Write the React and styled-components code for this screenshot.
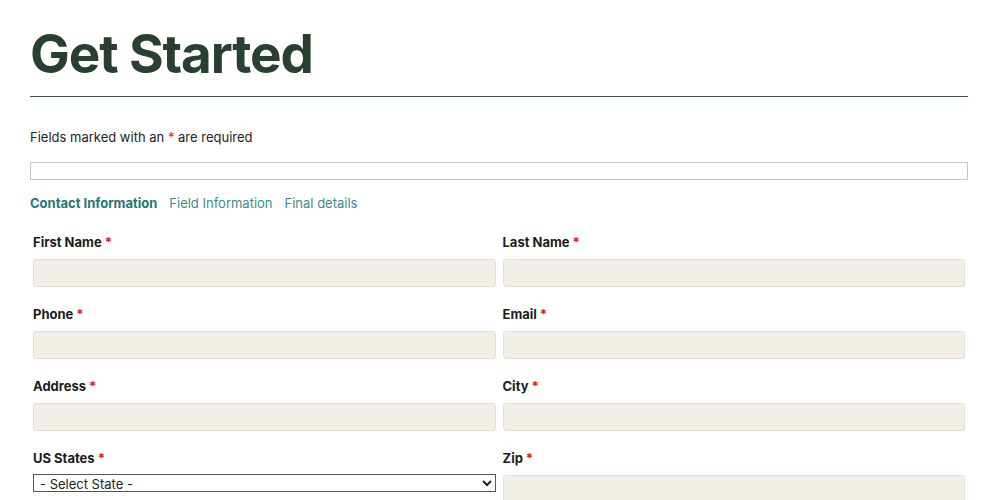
import React from 'react';
import styled, { createGlobalStyle } from 'styled-components';

const GlobalStyle = createGlobalStyle`
  html, body {
    margin: 0;
    padding: 0;
    background: #ffffff;
    font-family: Inter, "Liberation Sans", sans-serif;
    color: #1e1e1e;
  }
`;

const Page = styled.div`
  padding: 22px 32px 0 30px;
`;

const Title = styled.h1`
  margin: 0;
  font-family: Inter, "Liberation Sans", sans-serif;
  font-size: 53px;
  line-height: 64px;
  font-weight: 700;
  letter-spacing: -1.1px;
  color: #283f31;
`;

const Rule = styled.hr`
  margin: 10px 0 0;
  border: 0;
  border-top: 1px solid #3d5446;
`;

const Note = styled.p`
  margin: 31px 0 0;
  font-size: 13px;
  line-height: 18px;
  color: #222;
`;

const Req = styled.span`
  color: #e2161b;
`;

const Progress = styled.div`
  margin-top: 16px;
  height: 16px;
  border: 1px solid #c4c4c4;
  background: #fff;
`;

const Tabs = styled.nav`
  display: flex;
  gap: 12px;
  margin-top: 14px;
`;

const Tab = styled.span`
  font-size: 13px;
  line-height: 18px;
  font-weight: ${({ active }) => (active ? 700 : 400)};
  color: ${({ active }) => (active ? '#24777a' : '#3a8c8c')};
`;

const Grid = styled.div`
  display: grid;
  grid-template-columns: 1fr 1fr;
  column-gap: 7px;
  row-gap: 18px;
  margin: 21px 3px 0 3px;
`;

const Field = styled.div`
  display: flex;
  flex-direction: column;
`;

const Label = styled.label`
  font-size: 13px;
  line-height: 18px;
  font-weight: 700;
  color: #1c1c1c;
  margin-bottom: 8px;

  ${Req} {
    margin-left: 3px;
  }
`;

const Input = styled.input`
  box-sizing: border-box;
  height: 28px;
  width: 100%;
  background: #f2efe8;
  border: 1px solid #e6dfd0;
  border-radius: 3px;
  outline: none;
`;

const Select = styled.select`
  box-sizing: border-box;
  height: 18px;
  width: 100%;
  margin-top: -1px;
  font-family: Inter, "Liberation Sans", sans-serif;
  font-size: 13px;
  color: #222;
  background: #fff;
  border: 1px solid #555;
  padding: 0 2px;
`;

const fields = [
  ['First Name', 'Last Name'],
  ['Phone', 'Email'],
  ['Address', 'City'],
];

export default function App() {
  return (
    <>
      <GlobalStyle />
      <Page>
        <Title>Get Started</Title>
        <Rule />
        <Note>
          Fields marked with an <Req>*</Req> are required
        </Note>
        <Progress />
        <Tabs>
          <Tab active>Contact Information</Tab>
          <Tab>Field Information</Tab>
          <Tab>Final details</Tab>
        </Tabs>
        <Grid>
          {fields.flat().map((name) => (
            <Field key={name}>
              <Label>
                {name}
                <Req>*</Req>
              </Label>
              <Input />
            </Field>
          ))}
          <Field>
            <Label>
              US States
              <Req>*</Req>
            </Label>
            <Select defaultValue="">
              <option value="">- Select State -</option>
            </Select>
          </Field>
          <Field>
            <Label>
              Zip
              <Req>*</Req>
            </Label>
            <Input />
          </Field>
        </Grid>
      </Page>
    </>
  );
}
